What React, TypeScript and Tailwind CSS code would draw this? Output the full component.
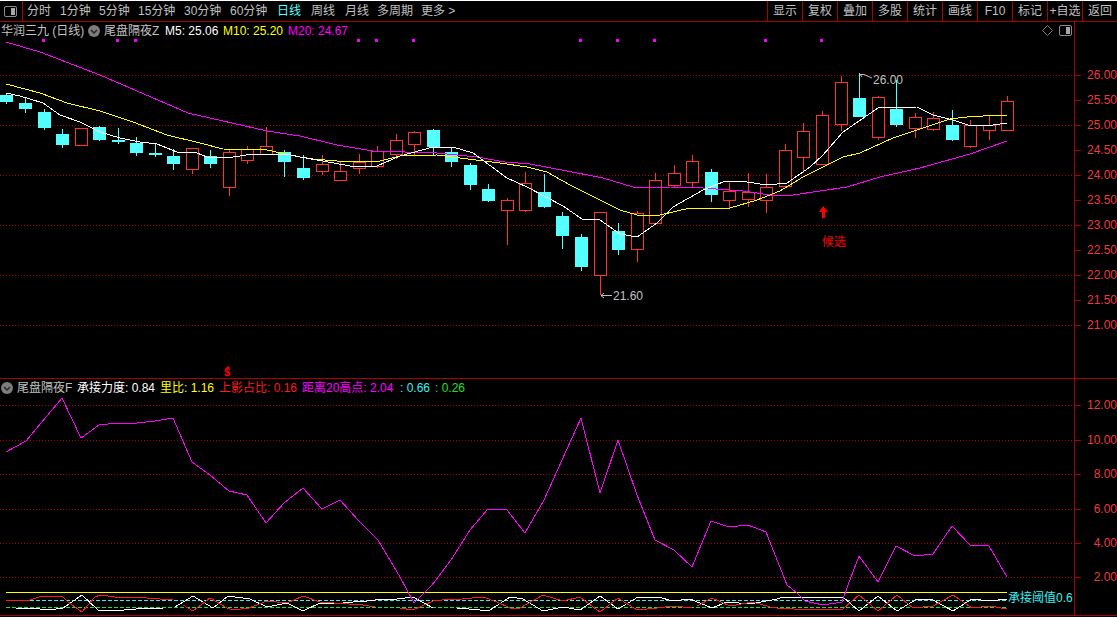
type Candle = [number, number, number, number, number, 'r' | 'c']

const tabs = [
  { label: '分时', w: 'w-[33px]' },
  { label: '1分钟', w: 'w-[39px]' },
  { label: '5分钟', w: 'w-[39px]' },
  { label: '15分钟', w: 'w-[46px]' },
  { label: '30分钟', w: 'w-[46px]' },
  { label: '60分钟', w: 'w-[47px]' },
  { label: '日线', w: 'w-[34px]', active: true },
  { label: '周线', w: 'w-[34px]' },
  { label: '月线', w: 'w-[32px]' },
  { label: '多周期', w: 'w-[44px]' },
  { label: '更多 >', w: 'w-[40px]' },
]

const tools = ['显示', '复权', '叠加', '多股', '统计', '画线', 'F10', '标记', '+自选', '返回']

// x centre, body top, body bottom, wick top, wick bottom, colour
const candles: Candle[] = [
  [6.5, 95, 102, 94, 104, 'c'], [25.5, 103, 109, 98, 113, 'c'], [44.5, 112, 128, 109, 130, 'c'],
  [62.5, 134, 145, 129, 148, 'c'], [81.5, 128, 146, 128, 146, 'r'], [99.5, 127, 140, 126, 141, 'c'],
  [118.5, 140, 142, 128, 144, 'c'], [136.5, 143, 153, 137, 156, 'c'], [155.5, 153, 155, 143, 157, 'c'],
  [173.5, 156, 164, 149, 170, 'c'], [192.5, 148, 170, 148, 174, 'r'], [210.5, 156, 164, 150, 168, 'c'],
  [229.5, 152, 188, 149, 196, 'r'], [247.5, 149, 161, 146, 164, 'r'], [266.5, 146, 155, 127, 155, 'r'],
  [284.5, 152, 162, 150, 177, 'c'], [303.5, 168, 178, 155, 180, 'c'], [322.5, 164, 172, 155, 175, 'r'],
  [340.5, 171, 181, 161, 181, 'r'], [359.5, 162, 169, 154, 174, 'r'], [377.5, 151, 167, 146, 168, 'r'],
  [396.5, 140, 155, 134, 159, 'r'], [414.5, 132, 145, 131, 155, 'r'], [433.5, 130, 147, 129, 155, 'c'],
  [451.5, 152, 162, 148, 167, 'c'], [470.5, 165, 185, 163, 190, 'c'], [488.5, 189, 201, 184, 202, 'c'],
  [507.5, 200, 211, 198, 245, 'r'], [525.5, 183, 211, 172, 212, 'r'], [544.5, 192, 207, 174, 208, 'c'],
  [562.5, 216, 236, 212, 249, 'c'], [581.5, 237, 267, 234, 271, 'c'], [600.5, 212, 276, 212, 295, 'r'],
  [618.5, 231, 250, 223, 255, 'c'], [637.5, 213, 250, 211, 262, 'r'], [655.5, 180, 224, 173, 224, 'r'],
  [674.5, 173, 186, 165, 187, 'r'], [692.5, 161, 183, 155, 187, 'r'], [711.5, 172, 195, 169, 202, 'c'],
  [729.5, 191, 201, 183, 208, 'r'], [748.5, 192, 200, 173, 207, 'r'], [766.5, 187, 201, 174, 213, 'r'],
  [785.5, 150, 187, 144, 187, 'r'], [803.5, 131, 158, 123, 173, 'r'], [822.5, 115, 165, 111, 165, 'r'],
  [841.5, 82, 125, 76, 131, 'r'], [859.5, 98, 117, 73, 117, 'c'], [878.5, 97, 138, 96, 140, 'r'],
  [896.5, 109, 125, 80, 127, 'c'], [915.5, 117, 129, 113, 138, 'r'], [933.5, 118, 130, 112, 131, 'r'],
  [952.5, 125, 140, 110, 141, 'c'], [970.5, 125, 147, 120, 148, 'r'], [989.5, 125, 131, 116, 140, 'r'],
  [1007.5, 101, 131, 96, 131, 'r'],
]

const ma5 = '6,93 20,96 43,103 60,115 80,122 100,132 120,138 140,142 157,144 177,152 197,153 207,157 233,157 253,154 287,154 300,157 323,161 350,166 377,166 400,156 433,147 453,147 473,153 507,178 527,187 563,206 582,219 600,220 620,234 637,237 657,223 673,207 703,190 723,182 740,181 767,185 787,183 810,167 823,155 843,132 878,108 917,107 933,115 953,120 968,125 993,125 1007,123'
const ma10 = '6,84 40,93 67,103 100,111 133,122 167,135 200,143 223,149 267,150 300,157 313,159 337,161 380,161 400,156 437,155 460,158 500,163 527,167 547,172 570,185 590,195 620,210 637,215 660,215 690,208 730,208 757,200 780,191 803,177 843,157 860,153 893,138 923,128 950,119 967,117 1000,115 1007,115'
const ma20 = '6,42 40,52 100,75 188,113 267,131 300,136 337,145 373,151 437,153 477,157 505,162 530,164 567,171 603,178 633,187 670,187 703,188 743,191 770,195 793,195 847,187 880,177 920,168 970,154 1007,141'

const distance = '6,452 26,441 62,398 81,438 99,425 118,423 137,423 155,421 173,418 192,462 210,475 229,491 247,495 266,523 284,503 303,488 322,509 340,500 359,521 378,540 400,577 414,603 432,585 451,560 470,530 488,509 507,510 525,533 544,500 562,460 581,418 600,493 618,440 637,495 655,540 674,550 692,567 711,521 729,527 748,525 766,532 787,585 797,593 805,601 823,605 842,602 848,585 859,556 878,582 896,546 915,556 933,554 952,526 970,545 989,546 1007,577'

const redBand = [
  '6,600 30,600 42,596 63,597 68,602 82,612 95,597 100,595 115,597 147,598 173,600',
  '183,605 193,611 210,598 227,608 233,610 249,608 267,601 287,603 303,596 320,602 363,605 375,607',
  '400,608 413,610 433,601 442,600 462,599 483,597 497,602 510,608 520,608 543,595 563,601 580,597 600,612 618,598 637,610 657,608 673,606 692,608',
  '697,606 712,598 730,606 753,602 770,607 777,608 810,610 843,609 859,595 878,611 897,595 913,608 933,606 953,595 972,608 990,606 1007,609',
]
const whiteBand = [
  '16,608 40,609 50,610 63,608 82,595 98,610 113,611 147,608 163,608',
  '175,607 193,596 213,608 228,596 250,599 267,607 287,603 303,611 320,603 333,604 353,602 367,601 375,600 397,599 413,597 433,608',
  '457,608 480,610 490,610 510,597 523,599 543,611 563,607 580,610 600,596 618,609 638,597 658,597 673,601 690,599 712,608 727,602 750,604 777,599 783,597 843,597 859,611 878,596 897,611 917,599 933,600 953,611 972,599 990,601 1007,599',
]

const upperGrid = [75, 125, 175, 225, 275, 325]
const lowerGrid = [405, 440, 474, 509, 543, 577]
const dots = [43, 117, 135, 358, 376, 413, 580, 617, 654, 765, 821]
const upperAxis = ['26.00', '25.50', '25.00', '24.50', '24.00', '23.50', '23.00', '22.50', '22.00', '21.50', '21.00']
const lowerAxis = ['12.00', '10.00', '8.00', '6.00', '4.00', '2.00']

function SplitIcon() {
  return (
    <svg width="13" height="11" viewBox="0 0 13 11" className="shrink-0">
      <rect x="0.5" y="0.5" width="12" height="10" rx="1.5" fill="none" stroke="#8c8c8c" />
      <rect x="7" y="2" width="4" height="7" fill="#a8a8a8" />
    </svg>
  )
}

function ChevronCircle() {
  return (
    <svg width="12" height="12" viewBox="0 0 12 12" className="shrink-0">
      <circle cx="6" cy="6" r="6" fill="#7d7d7d" />
      <path d="M3 5 L6 8 L9 5" fill="none" stroke="#262626" strokeWidth="1.5" />
    </svg>
  )
}

function Line({ points, color }: { points: string; color: string }) {
  return <polyline points={points} fill="none" stroke={color} strokeWidth="1" shapeRendering="crispEdges" />
}

function Grid({ rows }: { rows: number[] }) {
  return (
    <>
      {rows.map(y => (
        <line key={y} x1="0" x2="1074" y1={y + 0.5} y2={y + 0.5} stroke="#b00000" strokeDasharray="1 2" shapeRendering="crispEdges" />
      ))}
    </>
  )
}

function CandleMark({ c }: { c: Candle }) {
  const [x, top, bottom, wickTop, wickBottom, kind] = c
  const color = kind === 'r' ? '#ff3232' : '#54ffff'
  return (
    <g shapeRendering="crispEdges">
      <line x1={x} x2={x} y1={wickTop} y2={wickBottom} stroke={color} />
      {kind === 'r' ? (
        <rect x={x - 6} y={top + 0.5} width="12" height={bottom - top - 1} fill="#000" stroke={color} />
      ) : (
        <rect x={x - 6.5} y={top} width="13" height={bottom - top} fill={color} />
      )}
    </g>
  )
}

function UpperChart() {
  return (
    <svg width="1074" height="339" viewBox="0 39 1074 339" className="block">
      <Grid rows={upperGrid} />
      {dots.map(x => (
        <rect key={x} x={x - 1} y="39" width="3" height="3" fill="#ff00ff" />
      ))}
      {candles.map(c => (
        <CandleMark key={c[0]} c={c} />
      ))}
      <Line points={ma20} color="#ff00ff" />
      <Line points={ma10} color="#ffff00" />
      <Line points={ma5} color="#ffffff" />

      {/* low marker */}
      <path d="M612 295.5 H601 M604 293 L601 295.5 L604 298" fill="none" stroke="#c0c0c0" />
      <text x="613" y="300" fill="#c0c0c0" fontSize="12">21.60</text>
      {/* high marker */}
      <path d="M860 74.5 H864 L872 78 M860 74.5 L862 77" fill="none" stroke="#c0c0c0" />
      <text x="873" y="84" fill="#c0c0c0" fontSize="12">26.00</text>

      {/* pick signal */}
      <path d="M823 206 L828 212 H825 V218 H822 V212 H819 Z" fill="#ff0000" />
      <text x="822" y="246" fill="#ff0000" fontSize="12">候选</text>
      <text x="224" y="376" fill="#ff0000" fontSize="11" fontWeight="700">$</text>
      <path d="M228 366 L230 368 H226 Z" fill="#ff0000" />
    </svg>
  )
}

function LowerChart() {
  return (
    <svg width="1074" height="219" viewBox="0 397 1074 219" className="block">
      <Grid rows={lowerGrid} />
      <line x1="6" x2="1007" y1="592.5" y2="592.5" stroke="#ffff00" shapeRendering="crispEdges" />
      <line x1="6" x2="1007" y1="600.5" y2="600.5" stroke="#3cf0f0" strokeDasharray="4 2" shapeRendering="crispEdges" />
      <line x1="6" x2="1007" y1="607.5" y2="607.5" stroke="#22e022" strokeDasharray="4 2" shapeRendering="crispEdges" />
      {whiteBand.map(p => (
        <Line key={p} points={p} color="#ffffff" />
      ))}
      {redBand.map(p => (
        <Line key={p} points={p} color="#ff1a1a" />
      ))}
      <Line points={distance} color="#ff00ff" />
      <text x="1008" y="602" fill="#3cf0f0" fontSize="12">承接阈值0.6</text>
    </svg>
  )
}

function Axis({ top, height, labels, ys }: { top: number; height: number; labels: string[]; ys: number[] }) {
  return (
    <svg width="42" height={height} viewBox={`1075 ${top} 42 ${height}`} className="block">
      {ys.map((y, i) => (
        <g key={y}>
          <line x1="1075" x2="1081" y1={y + 0.5} y2={y + 0.5} stroke="#aa0000" shapeRendering="crispEdges" />
          <text x="1117" y={y + 4} textAnchor="end" fill="#e83c3c" fontSize="12">{labels[i]}</text>
        </g>
      ))}
    </svg>
  )
}

export default function App() {
  return (
    <div className="flex h-[617px] w-[1117px] flex-col overflow-hidden bg-black font-['Liberation_Sans','Noto_Sans_CJK_SC',sans-serif] text-xs leading-none text-[#c0c0c0]">
      {/* Toolbar */}
      <div className="flex h-[22px] shrink-0 items-stretch border-t border-b border-t-white border-b-[#aa0000]">
        <div className="flex w-[23px] items-center border-r border-[#aa0000] pl-[4px]">
          <SplitIcon />
        </div>
        <div className="flex items-center pl-[4px]">
          {tabs.map(t => (
            <span key={t.label} className={`${t.w} whitespace-nowrap ${t.active ? 'text-[#54ffff]' : ''}`}>{t.label}</span>
          ))}
        </div>
        <div className="ml-auto flex overflow-hidden">
          {tools.map(t => (
            <span key={t} className="flex w-[35px] shrink-0 items-center justify-center whitespace-nowrap border-l border-[#aa0000]">{t}</span>
          ))}
        </div>
      </div>

      {/* Candles */}
      <div className="flex h-[357px] shrink-0 border-b border-[#aa0000]">
        <div className="w-[1074px] shrink-0">
          <div className="flex h-[17px] items-center pl-[1px]">
            <span className="w-[87px] whitespace-nowrap">华润三九 (日线)</span>
            <ChevronCircle />
            <span className="ml-[4px] w-[61px] whitespace-nowrap">尾盘隔夜Z</span>
            <span className="w-[58px] whitespace-nowrap text-white">M5: 25.06</span>
            <span className="w-[65px] whitespace-nowrap text-[#ffff00]">M10: 25.20</span>
            <span className="whitespace-nowrap text-[#ff00ff]">M20: 24.67</span>
            <div className="ml-auto flex items-center gap-[6px] pr-[2px]">
              <svg width="11" height="11" viewBox="0 0 11 11">
                <path d="M5.5 0.5 L10.5 5.5 L5.5 10.5 L0.5 5.5 Z" fill="none" stroke="#7d7d7d" />
              </svg>
              <SplitIcon />
            </div>
          </div>
          <UpperChart />
        </div>
        <div className="flex-1 border-l border-[#aa0000]">
          <Axis top={22} height={356} labels={upperAxis} ys={[75, 100, 125, 150, 175, 200, 225, 250, 275, 300, 325]} />
        </div>
      </div>

      {/* Indicator */}
      <div className="flex h-[237px] shrink-0 border-b border-[#aa0000]">
        <div className="w-[1074px] shrink-0">
          <div className="flex h-[18px] items-center pl-[1px]">
            <ChevronCircle />
            <span className="ml-[4px] w-[60px] whitespace-nowrap">尾盘隔夜F</span>
            <span className="w-[83px] whitespace-nowrap text-white">承接力度: 0.84</span>
            <span className="w-[59px] whitespace-nowrap text-[#ffff00]">里比: 1.16</span>
            <span className="w-[83px] whitespace-nowrap text-[#ff1a1a]">上影占比: 0.16</span>
            <span className="w-[98px] whitespace-nowrap text-[#ff00ff]">距离20高点: 2.04</span>
            <span className="w-[35px] whitespace-nowrap text-[#3cf0f0]">: 0.66</span>
            <span className="whitespace-nowrap text-[#22e022]">: 0.26</span>
          </div>
          <LowerChart />
        </div>
        <div className="flex-1 border-l border-[#aa0000]">
          <Axis top={379} height={237} labels={lowerAxis} ys={lowerGrid} />
        </div>
      </div>
    </div>
  )
}
